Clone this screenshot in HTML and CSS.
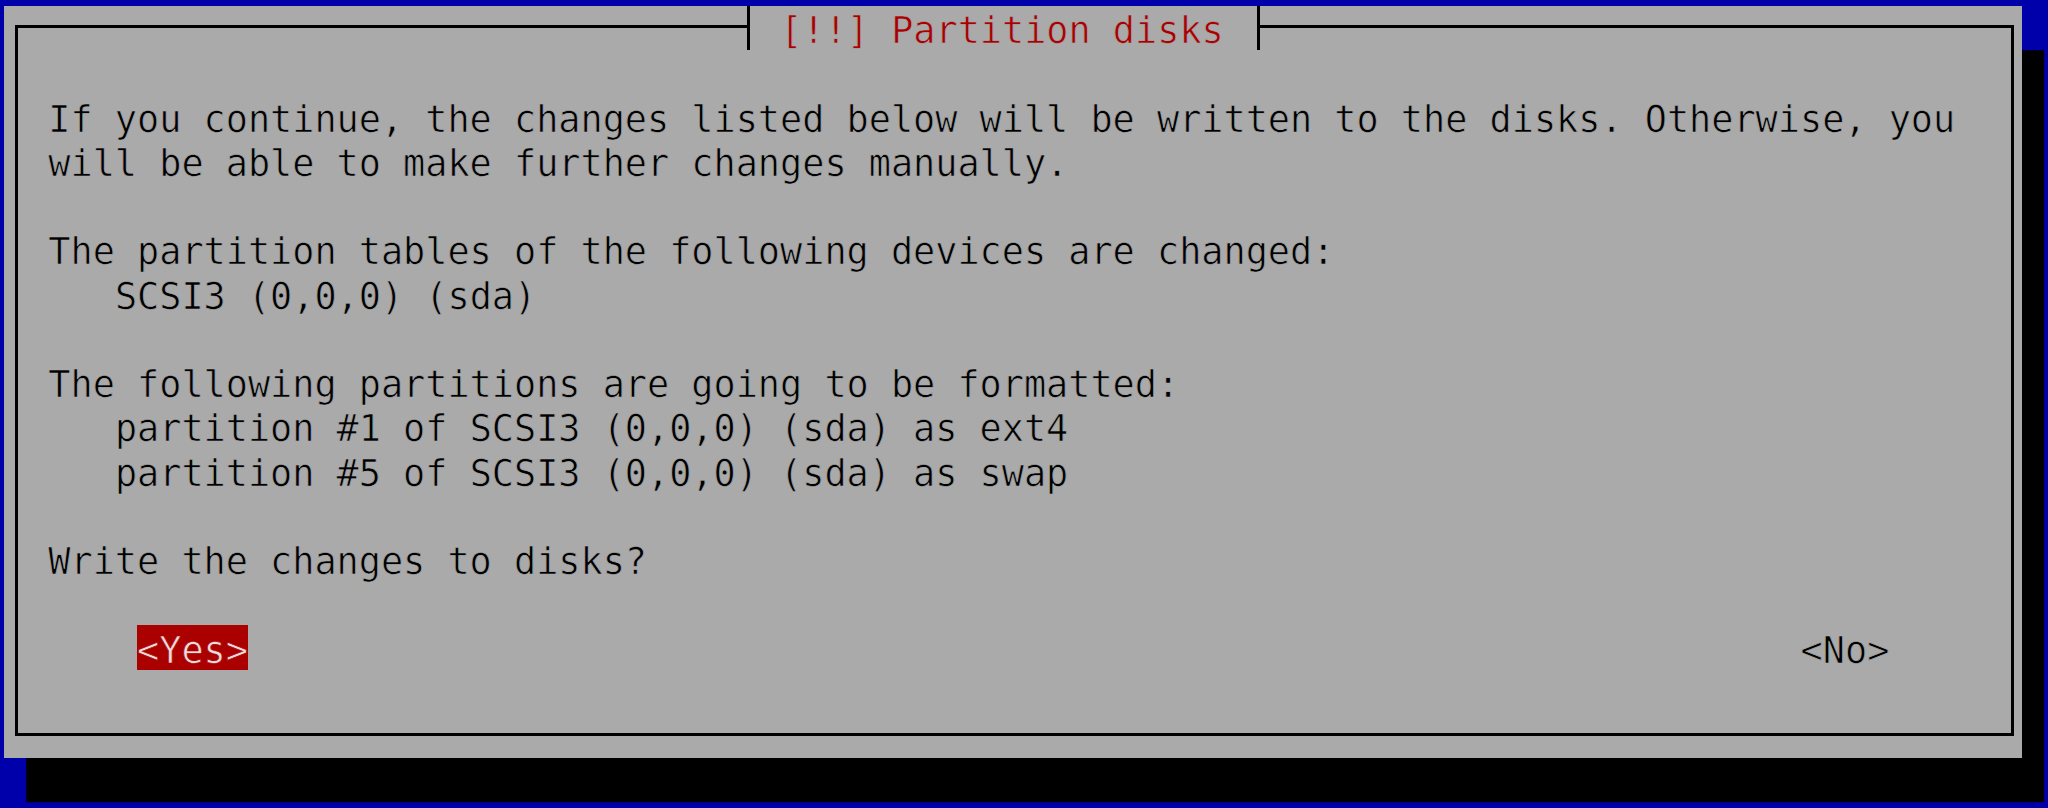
FILE: index.html
```html
<!DOCTYPE html>
<html lang="en">
<head>
<meta charset="utf-8">
<title>[!!] Partition disks</title>
<link rel="stylesheet" href="styles.css">
</head>
<body>
<div class="screen">
  <div class="dialog">
    <div class="titlebar">
      <span class="tick tick-l"></span>
      <span class="title-text">[!!] Partition disks</span>
      <span class="tick tick-r"></span>
    </div>
    <div class="frame">
      <div class="content">
        <div class="para">
          <div class="line">If you continue, the changes listed below will be written to the disks. Otherwise, you</div>
          <div class="line">will be able to make further changes manually.</div>
        </div>
        <div class="para">
          <div class="line">The partition tables of the following devices are changed:</div>
          <div class="line indent">SCSI3 (0,0,0) (sda)</div>
        </div>
        <div class="para">
          <div class="line">The following partitions are going to be formatted:</div>
          <div class="line indent">partition #1 of SCSI3 (0,0,0) (sda) as ext4</div>
          <div class="line indent">partition #5 of SCSI3 (0,0,0) (sda) as swap</div>
        </div>
        <div class="para">
          <div class="line">Write the changes to disks?</div>
        </div>
        <div class="buttons">
          <span class="btn btn-active">&lt;Yes&gt;</span>
          <span class="btn btn-no">&lt;No&gt;</span>
        </div>
      </div>
    </div>
  </div>
</div>
</body>
</html>
```
FILE: styles.css
```css
:root {
  --w: 22.18px;          /* character cell width */
  --h: 44.24px;          /* character cell height */
  --px: calc(var(--h) / 16);  /* one font pixel */
  --bl: 3.3px;           /* baseline nudge */
  --line: 3px;           /* box line thickness */
  --gray: #aaaaaa;
  --red: #aa0000;
}

html, body {
  margin: 0;
  padding: 0;
}

body {
  width: 2048px;
  height: 808px;
  overflow: hidden;
  background: #0000aa;
  font-family: "DejaVu Sans Mono", "Liberation Mono", monospace;
  font-size: 36.84px;
  line-height: var(--h);
  color: #000;
}

.screen {
  padding: 6px 0 0 4px;
}

.dialog {
  position: relative;
  box-sizing: border-box;
  width: calc(91 * var(--w));
  height: calc(17 * var(--h));
  background: var(--gray);
  box-shadow: var(--w) var(--h) 0 #000;
  display: flex;
  flex-direction: column;
  padding-top: calc(7 * var(--px));
  padding-left: calc(4 * var(--px));
  padding-right: calc(var(--w) - 4 * var(--px) - var(--line));
  padding-bottom: calc(var(--h) - 7 * var(--px) - var(--line));
  -webkit-text-stroke: 0.7px var(--gray);
}

.frame {
  flex: 1;
  border: var(--line) solid #000;
  padding-top: calc(2 * var(--h) - 7 * var(--px) - var(--line));
  padding-left: calc(2 * var(--w) - 4 * var(--px) - var(--line));
  padding-right: calc(var(--w) + 4 * var(--px));
}

.titlebar {
  position: absolute;
  top: 0;
  left: calc(33 * var(--w));
  width: calc(24 * var(--w));
  height: var(--h);
  display: flex;
  background: var(--gray);
}

.tick {
  position: relative;
  width: var(--w);
  flex: none;
}

.tick::before {
  content: "";
  position: absolute;
  top: 0;
  bottom: 0;
  left: calc(4 * var(--px));
  width: var(--line);
  background: #000;
}

.tick::after {
  content: "";
  position: absolute;
  top: calc(7 * var(--px));
  height: var(--line);
  background: #000;
}

.tick-l::after {
  left: 0;
  width: calc(4 * var(--px) + var(--line));
}

.tick-r::after {
  left: calc(4 * var(--px));
  right: 0;
}

.title-text {
  box-sizing: border-box;
  width: calc(22 * var(--w));
  padding-left: var(--w);
  padding-top: var(--bl);
  color: var(--red);
  white-space: pre;
}

.content {
  display: flex;
  flex-direction: column;
  gap: calc(var(--h) - var(--bl));
}

.para {
  padding-top: var(--bl);
}

.line {
  white-space: pre;
  height: var(--h);
}

.indent {
  padding-left: calc(3 * var(--w));
}

.buttons {
  display: flex;
  height: var(--h);
}

.btn {
  box-sizing: border-box;
  height: var(--h);
  padding-top: var(--bl);
  white-space: pre;
}

.btn-active {
  margin-left: calc(4 * var(--w));
  background: var(--red);
  color: #f0dcdc;
  -webkit-text-stroke: 0.7px var(--red);
}

.btn-no {
  margin-left: auto;
  margin-right: calc(4 * var(--w));
}
```
